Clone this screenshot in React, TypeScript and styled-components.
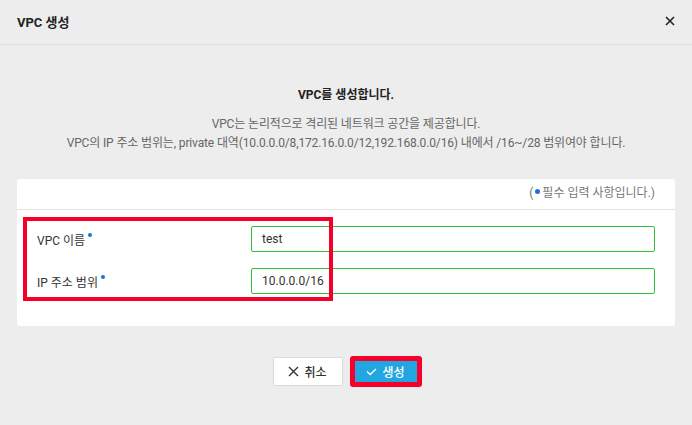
import React from "react";
import styled, { createGlobalStyle } from "styled-components";

const Global = createGlobalStyle`
  html, body { margin: 0; padding: 0; background: #ededed; }
  body { font-family: Roboto, "Noto Sans CJK KR", sans-serif; }
  * { box-sizing: border-box; }
`;

const Dialog = styled.div`
  width: 692px;
  height: 425px;
  background: #ededed;
  display: flex;
  flex-direction: column;
`;

const Header = styled.div`
  height: 45px;
  border-bottom: 1px solid #dcdcdc;
  display: flex;
  align-items: center;
  justify-content: space-between;
  padding: 0 16px 2px 17px;
`;

const Title = styled.h1`
  margin: 0;
  font-size: 13px;
  font-weight: 700;
  color: #222;
`;

const CloseBtn = styled.button`
  border: 0;
  background: none;
  padding: 0;
  width: 12px;
  height: 12px;
  display: flex;
  align-items: center;
  justify-content: center;
  cursor: pointer;
`;

const Body = styled.div`
  padding: 41px 17px 0;
  display: flex;
  flex-direction: column;
  align-items: stretch;
`;

const Intro = styled.div`
  text-align: center;
  margin-bottom: 26px;
`;

const Lead = styled.p`
  margin: 0 0 11px;
  font-size: 12px;
  line-height: 18px;
  font-weight: 700;
  color: #222;
`;

const Desc = styled.p`
  margin: 0;
  font-size: 12px;
  line-height: 19px;
  letter-spacing: -0.14px;
  color: #666;
`;

const Card = styled.div`
  background: #fff;
  border-radius: 3px;
  height: 147px;
  display: flex;
  flex-direction: column;
`;

const CardHead = styled.div`
  height: 31px;
  border-bottom: 1px solid #e2e2e2;
  display: flex;
  align-items: center;
  justify-content: flex-end;
  padding: 0 20px 2px;
  font-size: 12px;
  color: #777;
`;

const Note = styled.span`
  display: inline-flex;
  align-items: flex-start;
  line-height: 16px;
`;

const Dot = styled.span`
  width: 5px;
  height: 5px;
  border-radius: 50%;
  background: #1a73d9;
  margin: 4px 2px 0 2px;
`;

const CardBody = styled.div`
  position: relative;
  padding: 16px 20px 0;
  display: flex;
  flex-direction: column;
  gap: 16px;
`;

const Row = styled.div`
  display: grid;
  grid-template-columns: 214px 1fr;
  align-items: center;
  height: 26px;
`;

const Label = styled.label`
  font-size: 12px;
  color: #333;
  display: flex;
  align-items: flex-start;
  line-height: 16px;
  padding-top: 3px;
`;

const LabelDot = styled.span`
  width: 4px;
  height: 4px;
  border-radius: 50%;
  background: #1a73d9;
  margin: 0 0 0 3px;
`;

const Input = styled.input`
  height: 26px;
  width: 100%;
  border: 1px solid #2cc03c;
  border-radius: 2px;
  padding: 0 10px;
  font: inherit;
  font-size: 12px;
  color: #333;
  outline: none;
  background: #fff;
`;

const Highlight = styled.div`
  position: absolute;
  left: 6px;
  top: 7px;
  width: 310px;
  height: 84px;
  border: 4px solid #f5002a;
  pointer-events: none;
`;

const Actions = styled.div`
  display: flex;
  justify-content: center;
  gap: 8px;
  margin-top: 31px;
  padding-left: 1px;
`;

const Btn = styled.button<{ $primary?: boolean }>`
  width: 70px;
  height: 29px;
  display: flex;
  align-items: center;
  justify-content: center;
  gap: 5px;
  font: inherit;
  font-size: 12px;
  font-weight: 500;
  border-radius: 2px;
  cursor: pointer;
  border: 1px solid ${(p) => (p.$primary ? "#22a6e1" : "#dadada")};
  background: ${(p) => (p.$primary ? "#22a6e1" : "#fff")};
  color: ${(p) => (p.$primary ? "#fff" : "#333")};
  ${(p) => (p.$primary ? "outline: 5px solid #f5002a; outline-offset: -4px;" : "")}
`;

export default function App() {
  return (
    <>
      <Global />
      <Dialog>
        <Header>
          <Title>VPC 생성</Title>
          <CloseBtn aria-label="close">
            <svg width="10" height="10" viewBox="0 0 10 10">
              <path d="M1 1L9 9M9 1L1 9" stroke="#222" strokeWidth="1.6" />
            </svg>
          </CloseBtn>
        </Header>
        <Body>
          <Intro>
            <Lead>VPC를 생성합니다.</Lead>
            <Desc>VPC는 논리적으로 격리된 네트워크 공간을 제공합니다.</Desc>
            <Desc>
              VPC의 IP 주소 범위는, private 대역(10.0.0.0/8,172.16.0.0/12,192.168.0.0/16) 내에서 /16~/28 범위여야 합니다.
            </Desc>
          </Intro>
          <Card>
            <CardHead>
              <Note>
                (<Dot />필수 입력 사항입니다.)
              </Note>
            </CardHead>
            <CardBody>
              <Row>
                <Label>
                  VPC 이름<LabelDot />
                </Label>
                <Input defaultValue="test" />
              </Row>
              <Row>
                <Label>
                  IP 주소 범위<LabelDot />
                </Label>
                <Input defaultValue="10.0.0.0/16" />
              </Row>
              <Highlight />
            </CardBody>
          </Card>
          <Actions>
            <Btn>
              <svg width="11" height="11" viewBox="0 0 11 11">
                <path d="M1 1L10 10M10 1L1 10" stroke="#333" strokeWidth="1.4" />
              </svg>
              취소
            </Btn>
            <Btn $primary>
              <svg width="11" height="8" viewBox="0 0 11 8">
                <path d="M1 3.5L4.2 6.5L10 1" stroke="#fff" strokeWidth="1.3" fill="none" />
              </svg>
              생성
            </Btn>
          </Actions>
        </Body>
      </Dialog>
    </>
  );
}
